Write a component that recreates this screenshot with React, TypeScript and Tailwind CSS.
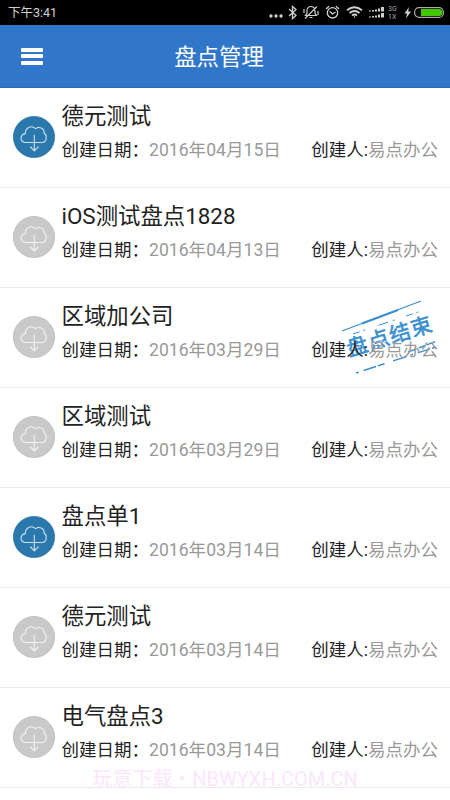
import clsx from 'clsx'

type Item = {
  id: number
  title: string
  date: string
  active?: boolean
  finished?: boolean
}

const CREATOR = '易点办公'

const items: Item[] = [
  { id: 1, title: '德元测试', date: '2016年04月15日', active: true },
  { id: 2, title: 'iOS测试盘点1828', date: '2016年04月13日' },
  { id: 3, title: '区域加公司', date: '2016年03月29日', finished: true },
  { id: 4, title: '区域测试', date: '2016年03月29日' },
  { id: 5, title: '盘点单1', date: '2016年03月14日', active: true },
  { id: 6, title: '德元测试', date: '2016年03月14日' },
  { id: 7, title: '电气盘点3', date: '2016年03月14日' },
]

function StatusBar() {
  return (
    <div className="flex h-[25px] items-center bg-black pl-2 text-[#d0d0d0]">
      <span className="text-[12.5px] leading-[25px]">下午3:41</span>
      <div className="ml-auto flex h-full items-center pr-[6px]">
        <svg width="14" height="25" viewBox="0 0 14 25" fill="currentColor">
          <circle cx="2" cy="16" r="1.7" />
          <circle cx="7" cy="16" r="1.7" />
          <circle cx="12" cy="16" r="1.7" />
        </svg>
        <svg className="ml-[5px]" width="10" height="25" viewBox="0 0 10 25" fill="none" stroke="currentColor" strokeWidth="1.3">
          <path d="M1 9l7 6.5-3.5 3V6.5L8 9.5 1 16" />
        </svg>
        <svg className="ml-[5px]" width="16" height="25" viewBox="0 0 16 25" fill="none" stroke="currentColor" strokeWidth="1.2">
          <path d="M2.5 15.5h11l-1.5-2V10.5a4 4 0 0 0-8 0v3zM6.5 17.5h3M2 18.500L14 6.5M1 9v4M15 11v4" />
        </svg>
        <svg className="ml-[6px]" width="15" height="25" viewBox="0 0 15 25" fill="none" stroke="currentColor" strokeWidth="1.3">
          <circle cx="7.5" cy="12.8" r="5.2" />
          <path d="M4.8 11.5l2.7 2.5 3-2M1 9l3-2.8M14 9l-3-2.8" />
        </svg>
        <svg className="ml-[6px]" width="17" height="25" viewBox="0 0 17 25" fill="none" stroke="currentColor" strokeWidth="1.8">
          <path d="M1 10.3q7.5-6 15 0M3.5 13q5-4 10 0M6 15.500q2.500-2 5 0" />
          <circle cx="8.5" cy="17" r="0.8" fill="currentColor" stroke="none" />
        </svg>
        <svg className="ml-[6px]" width="16" height="25" viewBox="0 0 16 25" fill="currentColor">
          <path d="M0 10.500h2v1H0zM3 10h2v1.500H3zM6 9.500h2v2H6zM9 8.500h2v3H9zM12 7h3v4.500h-3zM0 16.500h2v1H0zM3 16h2v1.500H3zM6 15.500h2v2H6zM9 14.500h2v3H9zM12 13h3v4.500h-3z" />
        </svg>
        <div className="ml-[3px] w-[11px] text-[7px] leading-[8px] text-[#aaa]">
          <div>3G</div>
          <div>1X</div>
        </div>
        <svg className="ml-[5px]" width="8" height="25" viewBox="0 0 8 25" fill="currentColor">
          <path d="M5 7L.5 13.500h2.500L2 18.500l5-7H4.200z" />
        </svg>
        <svg className="ml-[2px]" width="30" height="25" viewBox="0 0 30 25">
          <rect x=".6" y="7.6" width="28.8" height="9.8" rx="4.5" fill="none" stroke="#aaa" strokeWidth="1.2" />
          <path d="M7 9h18a3.500 3.500 0 0 1 0 7H7z" fill="#43c800" />
        </svg>
      </div>
    </div>
  )
}

function Header() {
  return (
    <header className="flex h-[63px] items-center border-b border-[#2868b5] bg-[#3076c9] text-white">
      <button className="ml-[21px] flex w-[22px] flex-col gap-[2.5px]" aria-label="menu">
        <span className="h-[4px] rounded-[1px] bg-white" />
        <span className="h-[4px] rounded-[1px] bg-white" />
        <span className="h-[4px] rounded-[1px] bg-white" />
      </button>
      <h1 className="mr-[55px] flex-1 pt-[2px] text-center text-[22.4px] leading-none">盘点管理</h1>
    </header>
  )
}

function CloudBadge({ active }: { active?: boolean }) {
  return (
    <svg className="shrink-0" width="42" height="42" viewBox="0 0 42 42" fill="none">
      <circle
        cx="21"
        cy="21"
        r="20.6"
        className={clsx(active ? 'fill-[#2b78ad] stroke-[#2b78ad]' : 'fill-[#c9c9c9] stroke-[#b3bcc4]')}
        strokeWidth=".8"
      />
      <g
        className={clsx(active ? 'stroke-[#cfe2ee]' : 'stroke-[#f3f3f3]')}
        strokeWidth="1.1"
        strokeLinecap="round"
        strokeLinejoin="round"
      >
        <path d="M13 26.5C6.5 26 6.5 18.5 12.5 17.6C12 12 18 8.500 22.500 12.600C26.500 10 32 12.500 31 17C34.500 19.500 34 26.300 29 26.500Z" />
        <path d="M21.300 19v15.500M17.500 31l3.800 3.800 3.800-3.800" />
      </g>
    </svg>
  )
}

function FinishedStamp() {
  return (
    <svg className="absolute top-[8px] left-[338px]" width="104" height="84" viewBox="0 0 104 84" fill="none" stroke="#3a8fd0">
      <path d="M4 35L83 5" strokeWidth="1.3" />
      <path d="M24 27.500L60 14" strokeWidth="2" />
      <path d="M15 38L83 15" strokeWidth="1" strokeDasharray="7 4 2 14 10 5 2 12" />
      <path d="M70 56L99 45" strokeWidth="1.4" strokeDasharray="9 3 6 2" />
      <path d="M18 77L98 51" strokeWidth="1.4" strokeDasharray="3 5 13 2 7 9 14 4" />
      <text
        x="11.5"
        y="60.5"
        transform="rotate(-17 11 61)"
        fill="#3a8fd0"
        strokeWidth=".6"
        className="text-[21px] tracking-[1.3px]"
      >
        盘点结束
      </text>
      {/* worn ink */}
      <path
        d="M9 55l16-5M13 63l14-5M36 60l14-5M34 48l12-4"
        stroke="#fff"
        strokeWidth="1"
        strokeDasharray="3 2 1 2"
      />
    </svg>
  )
}

function Row({ item }: { item: Item }) {
  return (
    <li className="relative flex h-[100px] border-b border-[#ebebeb] pt-[14px] pr-[12px] pl-[13px]">
      {item.finished && <FinishedStamp />}
      <div className="pt-[14px]">
        <CloudBadge active={item.active} />
      </div>
      <div className="relative ml-[6.5px] flex-1 text-[#222]">
        <div className="text-[22.4px] leading-[28px]">{item.title}</div>
        <div className="mt-[7px] flex justify-between text-[17.5px] leading-[26px] whitespace-nowrap">
          <span>
            创建日期：<span className="text-[17.6px] text-[#999]">{item.date}</span>
          </span>
          <span>
            创建人:<span className="text-[#999]">{CREATOR}</span>
          </span>
        </div>
      </div>
    </li>
  )
}

export default function App() {
  return (
    <div lang="zh-CN" className="relative h-[800px] w-[450px] overflow-hidden bg-white font-[Roboto,'Noto_Sans_CJK_SC',sans-serif]">
      <StatusBar />
      <Header />
      <ul>
        {items.map((item) => (
          <Row key={item.id} item={item} />
        ))}
      </ul>
      <div className="absolute top-[766px] left-0 w-full text-center text-[20px] leading-[26px] text-[#fbe6fb]">
        玩意下载・NBWYXH.COM.CN
      </div>
    </div>
  )
}
